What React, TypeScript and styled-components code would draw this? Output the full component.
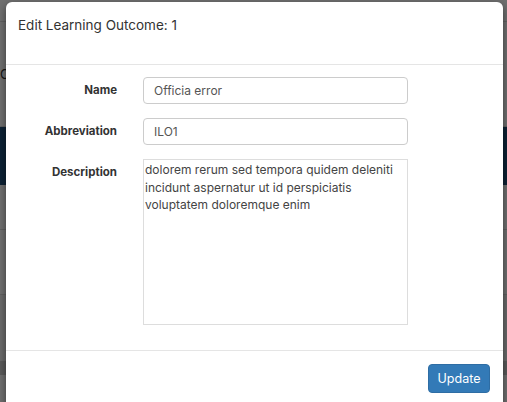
import React from "react";
import styled, { createGlobalStyle } from "styled-components";

const Global = createGlobalStyle`
  html, body { margin: 0; padding: 0; }
  body { background: #6a6a6a; font-family: Inter, "Open Sans", sans-serif; }
  * { box-sizing: border-box; }
`;

const Screen = styled.div`
  position: relative;
  width: 507px;
  height: 402px;
  overflow: hidden;
  background: #ffffff;
`;

const PageContent = styled.div`
  display: flex;
  flex-direction: column;
  height: 100%;
`;

const PageRow = styled.div<{ $h: number; $bg?: string; $line?: boolean }>`
  height: ${(p) => p.$h}px;
  background: ${(p) => p.$bg || "#fff"};
  border-bottom: ${(p) => (p.$line ? "1px solid #ddd" : "none")};
  color: #333;
  font-size: 13px;
  display: flex;
  align-items: center;
  justify-content: space-between;
`;

const Backdrop = styled.div`
  position: absolute;
  inset: 0;
  background: rgba(0, 0, 0, 0.56);
`;

const Modal = styled.div`
  position: absolute;
  left: 6px;
  top: 2px;
  width: 497px;
  height: 440px;
  background: #fff;
  border-radius: 6px;
  box-shadow: 0 3px 9px rgba(0, 0, 0, 0.5);
  display: flex;
  flex-direction: column;
`;

const Header = styled.div`
  height: 63px;
  padding: 13px 12px 0;
  border-bottom: 1px solid #e5e5e5;
`;

const Title = styled.h4`
  margin: 0;
  font-size: 13.5px;
  font-weight: 400;
  color: #333;
  line-height: 20px;
`;

const Body = styled.div`
  padding: 12px 15px 25px;
  display: grid;
  grid-template-columns: 96px 265px;
  column-gap: 26px;
  row-gap: 14px;
  border-bottom: 1px solid #e5e5e5;
`;

const Label = styled.label`
  text-align: right;
  font-weight: 700;
  font-size: 11.5px;
  color: #333;
  padding-top: 7px;
  line-height: 13px;
`;

const Input = styled.input`
  height: 27px;
  width: 265px;
  border: 1px solid #ccc;
  border-radius: 4px;
  padding: 0 10px;
  font-family: inherit;
  font-size: 12px;
  color: #555;
  outline: none;
`;

const TextArea = styled.textarea`
  width: 265px;
  height: 166px;
  border: 1px solid #ddd;
  border-radius: 0;
  padding: 1px 1px;
  font-family: inherit;
  font-size: 12px;
  line-height: 17.5px;
  color: #444;
  resize: none;
  outline: none;
`;

const Footer = styled.div`
  display: flex;
  justify-content: flex-end;
  padding: 13px 13px;
`;

const Button = styled.button`
  width: 62px;
  height: 29px;
  background: #337ab7;
  border: 1px solid #2e6da4;
  border-radius: 4px;
  color: #fff;
  font-family: inherit;
  font-size: 12.5px;
  padding: 0;
`;

export default function App() {
  return (
    <>
      <Global />
      <Screen>
        <PageContent>
          <PageRow $h={22} $line />
          <PageRow $h={105} $line>O</PageRow>
          <PageRow $h={58} $bg="#1f4f7a" />
          <PageRow $h={45} $line />
          <PageRow $h={65} $line />
          <PageRow $h={66} $bg="#f4f4f4" />
          <PageRow $h={14} $bg="#cfcfcf" />
        </PageContent>
        <Backdrop />
        <Modal>
          <Header>
            <Title>Edit Learning Outcome: 1</Title>
          </Header>
          <Body>
            <Label>Name</Label>
            <Input defaultValue="Officia error" />
            <Label>Abbreviation</Label>
            <Input defaultValue="ILO1" />
            <Label>Description</Label>
            <TextArea defaultValue="dolorem rerum sed tempora quidem deleniti incidunt aspernatur ut id perspiciatis voluptatem doloremque enim" />
          </Body>
          <Footer>
            <Button>Update</Button>
          </Footer>
        </Modal>
      </Screen>
    </>
  );
}
